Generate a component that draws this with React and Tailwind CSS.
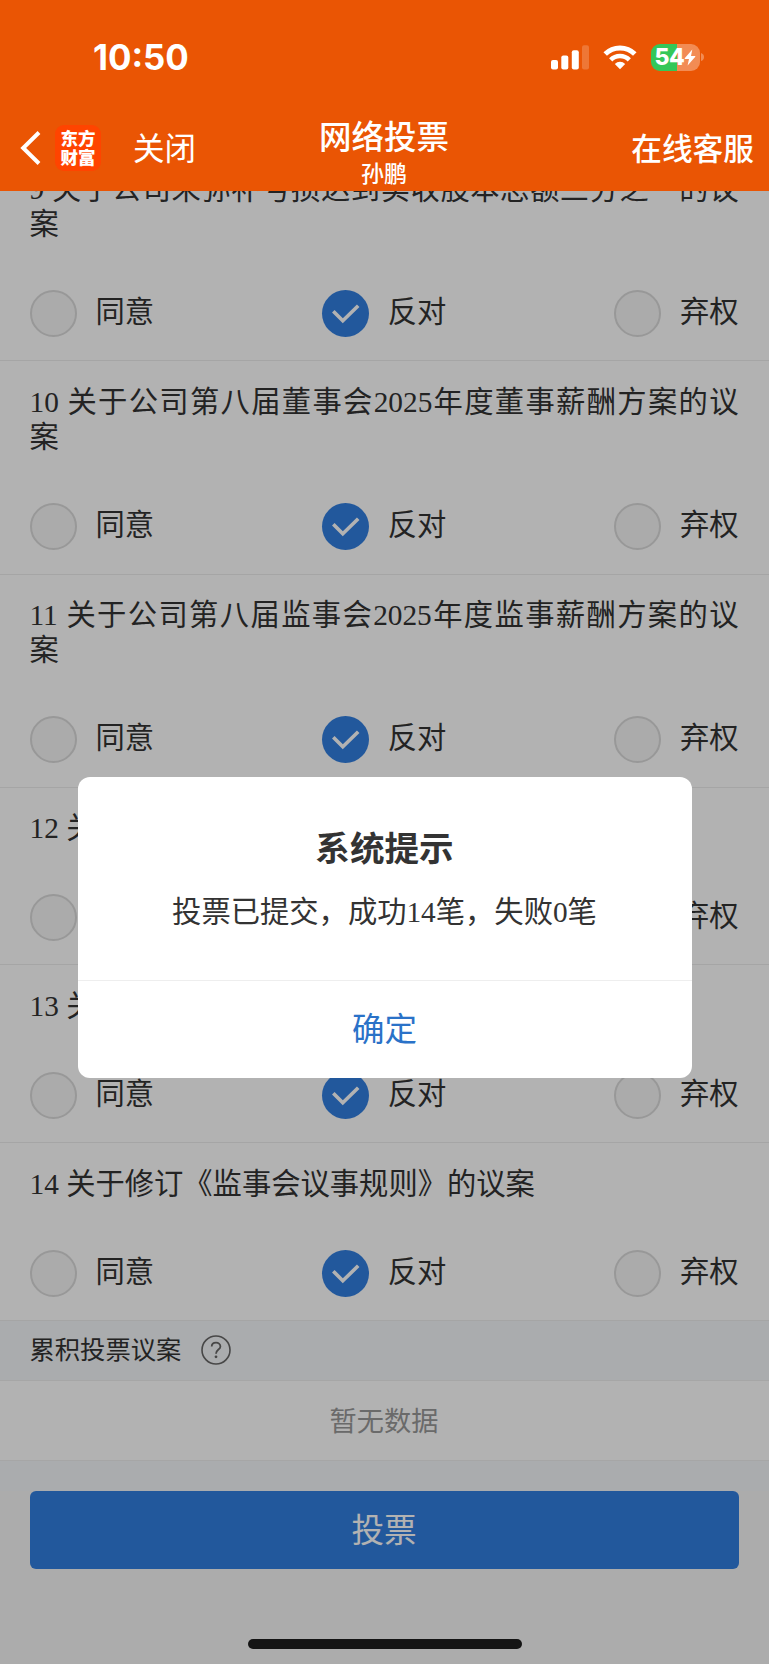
import { useState } from "react";

const initialProposals = [
  { id: 9, title: "关于公司未弥补亏损达到实收股本总额三分之一的议案", vote: "against" },
  { id: 10, title: "关于公司第八届董事会2025年度董事薪酬方案的议案", vote: "against" },
  { id: 11, title: "关于公司第八届监事会2025年度监事薪酬方案的议案", vote: "against" },
  { id: 12, title: "关于修订《公司章程》的议案", vote: "against" },
  { id: 13, title: "关于修订《股东会议事规则》的议案", vote: "against" },
  { id: 14, title: "关于修订《监事会议事规则》的议案", vote: "against" },
];

const options = [
  { value: "agree", label: "同意" },
  { value: "against", label: "反对" },
  { value: "abstain", label: "弃权" },
];

const StatusBar = () => (
  <div className="flex h-[114px] items-center justify-between pl-[93px] pr-[65px]">
    <span className="pt-[1px] font-['Inter',sans-serif] text-[34.8px] font-bold leading-none">10:50</span>
    <div className="flex items-center">
      <svg width="38" height="25" viewBox="0 0 38 25" fill="#fff">
        <rect x="0" y="15" width="7" height="9.5" rx="2" />
        <rect x="10.3" y="10.5" width="7" height="14" rx="2" />
        <rect x="20.8" y="5.3" width="7" height="19.2" rx="2" />
        <rect x="31" y="0.3" width="7" height="24.2" rx="2" opacity="0.2" />
      </svg>
      <svg className="ml-[14px]" width="34" height="25" viewBox="0 0 34 25" fill="none" stroke="#fff" strokeWidth="5">
        <path d="M2.2 9 A21 21 0 0 1 31.8 9" />
        <path d="M7.7 14.8 A13.2 13.2 0 0 1 26.3 14.8" strokeWidth="4.6" />
        <path d="M17 24.3 L11.8 18.9 A7.6 7.6 0 0 1 22.2 18.9 Z" fill="#fff" stroke="none" />
      </svg>
      <div className="ml-[14px] flex h-[27px] w-[49px] items-center justify-center rounded-[9px] bg-linear-to-r from-[#34c759] from-54% to-[#f28c54] to-54%">
        <span className="font-['Inter',sans-serif] text-[23px] font-extrabold leading-none tracking-[-0.5px]">54</span>
        <svg width="12" height="17" viewBox="0 0 12 17" fill="#fff">
          <path d="M8.3 0.5 L0.7 9.2 Q0.3 10 1.2 10 H5 L3.6 16.5 L11.3 7.7 Q11.7 6.9 10.8 6.9 H7 Z" />
        </svg>
      </div>
      <svg className="ml-[1px]" width="3" height="8" viewBox="0 0 3 8">
        <path d="M0 0 Q3 1 3 4 Q3 7 0 8 Z" fill="#f28c54" />
      </svg>
    </div>
  </div>
);

const NavBar = () => (
  <div className="grid h-[77px] grid-cols-[1fr_auto_1fr]">
    <div className="flex items-center pb-[9px] pl-5">
      <svg width="21" height="36" viewBox="0 0 21 36" fill="none" stroke="#fff" strokeWidth="4">
        <path d="M19 2.5 L3.2 18 L19 33.5" />
      </svg>
      <div className="ml-[14px] flex h-[46px] w-[46px] flex-col items-center justify-center rounded-[9px] bg-[#ff4400] pb-[2px] text-[17.5px] font-black leading-[19px]">
        <span>东方</span>
        <span>财富</span>
      </div>
      <button className="ml-[32px] pb-[2px] text-[31.5px] leading-none">关闭</button>
    </div>
    <div className="flex flex-col items-center pr-[1px] pt-[4px] font-medium">
      <h1 className="text-[32.5px] leading-[33px]">网络投票</h1>
      <p className="mt-[10px] text-[23px] leading-[23px]">孙鹏</p>
    </div>
    <div className="flex items-center justify-end pb-[10px] pr-[15px]">
      <button className="text-[30.7px] font-medium leading-none">在线客服</button>
    </div>
  </div>
);

const VoteOption = ({ label, checked, onSelect }) => (
  <button onClick={onSelect} className="flex h-[47px] items-center gap-[19px]">
    {checked ? (
      <span className="flex size-[47px] items-center justify-center rounded-full bg-[#327fe0]">
        <svg width="47" height="47" viewBox="0 0 47 47" fill="none" stroke="#fff" strokeWidth="3.6">
          <path d="M11.3 21.2 L20.8 30.8 L36.2 15.8" />
        </svg>
      </span>
    ) : (
      <span className="size-[47px] rounded-full border-2 border-[#dadada] bg-[#f5f5f5]" />
    )}
    <span className="pb-[2px] leading-[35px]">{label}</span>
  </button>
);

const ProposalItem = ({ proposal, onVote }) => (
  <li className="border-b border-[#ececec] pb-[23.2px] pl-[29.5px] pr-[30.5px] pt-[23.3px]">
    <p className="text-justify leading-[35.3px]">
      {proposal.id} {proposal.title}
    </p>
    <div className="mt-[48px] flex justify-between">
      {options.map((option) => (
        <VoteOption
          key={option.value}
          label={option.label}
          checked={proposal.vote === option.value}
          onSelect={() => onVote(proposal.id, option.value)}
        />
      ))}
    </div>
  </li>
);

const ResultDialog = ({ onClose }) => (
  <div className="absolute inset-0 flex items-center justify-center bg-black/30">
    <div className="flex h-[301px] w-[614px] flex-col rounded-[12px] bg-white text-center">
      <div className="h-[203px] pt-[50px]">
        <h2 className="text-[34.6px] font-bold leading-[44px]">系统提示</h2>
        <p className="mt-[23px] text-[29.3px] leading-[36px]">投票已提交，成功14笔，失败0笔</p>
      </div>
      <button onClick={onClose} className="flex-1 border-t border-[#eeeeee] pt-[2px] text-[32.5px] text-[#2a72c8]">
        确定
      </button>
    </div>
  </div>
);

const App = () => {
  const [proposals, setProposals] = useState(initialProposals);
  const [showResult, setShowResult] = useState(true);

  const handleVote = (id, vote) => {
    setProposals((prev) => prev.map((p) => (p.id === id ? { ...p, vote } : p)));
  };

  return (
    <div className="flex h-[1665px] w-[769px] flex-col overflow-hidden bg-white pb-px font-['Liberation_Serif','Noto_Sans_CJK_SC',sans-serif] text-[#333333]">
      <header className="h-[191px] shrink-0 bg-[#ea5504] font-['Noto_Sans_CJK_SC',sans-serif] text-white">
        <StatusBar />
        <NavBar />
      </header>

      <main className="relative flex min-h-0 flex-1 flex-col overflow-hidden bg-[#f7f7f7]">
        <ul className="-mt-[42.6px] bg-white text-[29.3px]">
          {proposals.map((proposal) => (
            <ProposalItem key={proposal.id} proposal={proposal} onVote={handleVote} />
          ))}
        </ul>

        <div className="flex h-[60px] shrink-0 items-center border-b border-[#eeeeee] bg-[#f4f6f9] px-[29.5px]">
          <h3 className="text-[25.3px] leading-none">累积投票议案</h3>
          <svg className="ml-[20px]" width="30" height="30" viewBox="0 0 30 30" fill="none" stroke="#666" strokeWidth="1.6">
            <circle cx="15" cy="15" r="14" />
            <path d="M10.7 11.6 C10.7 6.5 19.4 6.4 19.4 11.4 C19.4 14.6 15 14.6 15 18.8" strokeWidth="1.8" />
            <circle cx="15" cy="21.8" r="1.4" fill="#666" stroke="none" />
          </svg>
        </div>
        <div className="flex h-[80px] shrink-0 items-center justify-center border-b border-[#eeeeee] bg-white pr-[1px] pt-[3px] text-[27.2px] text-[#999999]">
          暂无数据
        </div>

        <div className="h-[30px] shrink-0 bg-[#f4f6f9]" />
        <div className="pl-[29.5px] pr-[30.5px]">
          <button className="h-[78px] w-full rounded-[6px] bg-[#327fe0] pt-[3px] text-[32.6px] text-white">投票</button>
        </div>

        {showResult && <ResultDialog onClose={() => setShowResult(false)} />}
        <div className="absolute bottom-[15px] left-1/2 h-[10px] w-[274px] -translate-x-1/2 rounded-full bg-[#141414]" />
      </main>
    </div>
  );
};

export default App;
